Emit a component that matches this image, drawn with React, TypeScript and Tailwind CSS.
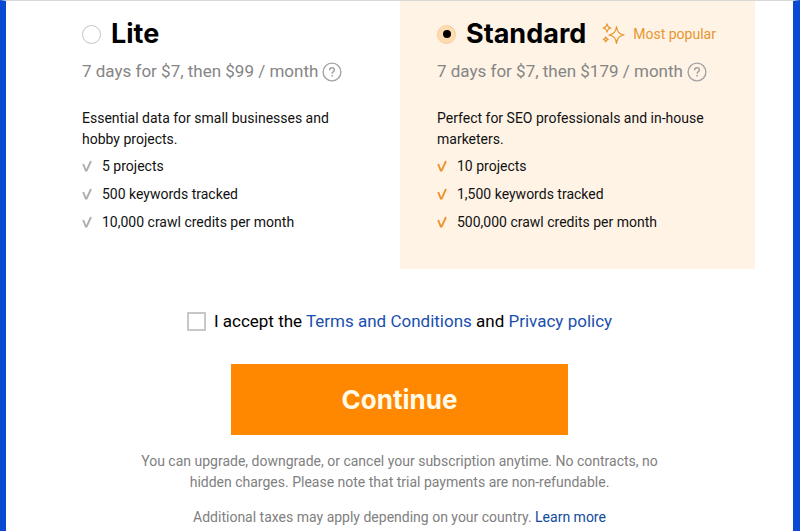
import React, { useState } from 'react';

type Plan = {
    id: string;
    name: string;
    price: string;
    description: string;
    features: string[];
    popular?: boolean;
};

const plans: Plan[] = [
    {
        id: 'lite',
        name: 'Lite',
        price: '7 days for $7, then $99 / month',
        description: 'Essential data for small businesses and hobby projects.',
        features: ['5 projects', '500 keywords tracked', '10,000 crawl credits per month'],
    },
    {
        id: 'standard',
        name: 'Standard',
        price: '7 days for $7, then $179 / month',
        description: 'Perfect for SEO professionals and in-house marketers.',
        features: ['10 projects', '1,500 keywords tracked', '500,000 crawl credits per month'],
        popular: true,
    },
];

const CheckIcon = ({ className }: { className: string }) => (
    <svg viewBox="0 0 10 12" className={`h-3 w-2.5 shrink-0 ${className}`} fill="none" stroke="currentColor" strokeWidth="1.9">
        <path d="M1.2 4L3.8 10.6H4.6L9 1" />
    </svg>
);

const HelpIcon = () => (
    <svg viewBox="0 0 20 20" className="size-5" fill="none" stroke="currentColor" strokeWidth="1.4">
        <circle cx="10" cy="10" r="8.9" />
        <path d="M7.6 8.2C7.6 6.6 8.6 5.8 10 5.8S12.4 6.7 12.4 8C12.4 9.7 10.1 9.7 10.1 11.7" strokeWidth="1.5" />
        <path d="M10.1 13V14.6" strokeWidth="1.6" />
    </svg>
);

const SparklesIcon = () => (
    <svg viewBox="0 0 23 22" className="h-[22px] w-[23px]" fill="none" stroke="currentColor" strokeWidth="1.2" strokeLinejoin="round">
        <path d="M14.5 3.5C15.2 8.8 16.9 11 22 12C16.9 13 15.2 15.2 14.5 20.5C13.8 15.2 12.1 13 7 12C12.1 11 13.8 8.8 14.5 3.5Z" />
        <path d="M5 .8C5.4 3.5 6.4 4.5 9 5C6.4 5.5 5.4 6.5 5 9.2C4.6 6.5 3.6 5.5 1 5C3.6 4.5 4.6 3.5 5 .8Z" />
        <path d="M3.8 13.8C4.1 15.4 4.6 15.9 6.2 16.3C4.6 16.7 4.1 17.2 3.8 18.8C3.5 17.2 3 16.7 1.4 16.3C3 15.9 3.5 15.4 3.8 13.8Z" />
    </svg>
);

const PlanCard = ({ plan, selected, onSelect }: { plan: Plan; selected: boolean; onSelect: () => void }) => (
    <section className={`px-[37px] pt-[15px] pb-[33px] ${selected ? 'bg-[#fff3e6]' : 'bg-white'}`}>
        <div className="flex h-9 items-center">
            <input
                type="radio"
                id={plan.id}
                name="plan"
                checked={selected}
                onChange={onSelect}
                className="grid size-[19px] shrink-0 appearance-none place-content-center rounded-full border border-[#c4c4c4] bg-white before:size-2 before:rounded-full checked:border-[#f5cf9f] checked:bg-[#ffdcb0] checked:before:bg-black"
            />
            <label htmlFor={plan.id} className="ml-[10px] font-[Inter,sans-serif] text-[27px] leading-9 font-bold text-black">
                {plan.name}
            </label>
            {plan.popular && (
                <span className="ml-4 flex items-center gap-2 text-sm whitespace-nowrap text-[#e8952f]">
                    <SparklesIcon />
                    Most popular
                </span>
            )}
        </div>
        <div className="mt-2 flex h-6 items-center gap-1 text-[17px] whitespace-nowrap text-[#858585]">
            {plan.price}
            <button type="button" aria-label={`About the ${plan.name} price`} className="text-[#a3a3a3]">
                <HelpIcon />
            </button>
        </div>
        <p className="mt-6 text-sm leading-[21px] text-[#111]">{plan.description}</p>
        <ul className="mt-[2px] text-sm leading-7 text-[#111]">
            {plan.features.map(feature => (
                <li key={feature} className="flex items-center gap-2.5">
                    <CheckIcon className={selected ? 'text-[#f0912a]' : 'text-[#adadad]'} />
                    {feature}
                </li>
            ))}
        </ul>
    </section>
);

const App = () => {
    const [selectedPlan, setSelectedPlan] = useState('standard');
    const [accepted, setAccepted] = useState(false);

    return (
        <main className="min-h-screen border-t border-r-[7px] border-l-[6px] border-t-[#d8d8d8] border-r-[#0a4ad2] border-l-[#0a4ad2] bg-white font-[Roboto,sans-serif]">
            <form onSubmit={e => e.preventDefault()}>
                <div className="grid grid-cols-2 pr-[38px] pl-[39px]">
                    {plans.map(plan => (
                        <PlanCard
                            key={plan.id}
                            plan={plan}
                            selected={selectedPlan === plan.id}
                            onSelect={() => setSelectedPlan(plan.id)}
                        />
                    ))}
                </div>

                <div className="mt-10 flex items-center justify-center gap-2 text-[17px] leading-6 text-black">
                    <input
                        type="checkbox"
                        id="terms"
                        checked={accepted}
                        onChange={e => setAccepted(e.target.checked)}
                        className="size-[19px] appearance-none border-2 border-[#c8c8c8] bg-white checked:bg-[#ff8800]"
                    />
                    <label htmlFor="terms">
                        I accept the <a href="#terms" className="text-[#1a4fae]">Terms and Conditions</a> and{' '}
                        <a href="#privacy" className="text-[#1a4fae]">Privacy policy</a>
                    </label>
                </div>

                <button type="submit" className="mx-auto mt-[31px] block h-[71px] w-[337px] bg-[#ff8800] font-[Inter,sans-serif] text-[26px] font-bold text-[#fffbe8]">
                    Continue
                </button>
            </form>

            <footer className="mx-auto mt-4 max-w-[540px] text-center text-sm leading-[21px] text-[#808080]">
                <p>
                    You can upgrade, downgrade, or cancel your subscription anytime. No contracts, no hidden charges. Please
                    note that trial payments are non-refundable.
                </p>
                <p className="mt-[14px]">
                    Additional taxes may apply depending on your country.{' '}
                    <a href="#taxes" className="text-[#0f4a9c]">Learn more</a>
                </p>
            </footer>
        </main>
    );
};

export default App;
